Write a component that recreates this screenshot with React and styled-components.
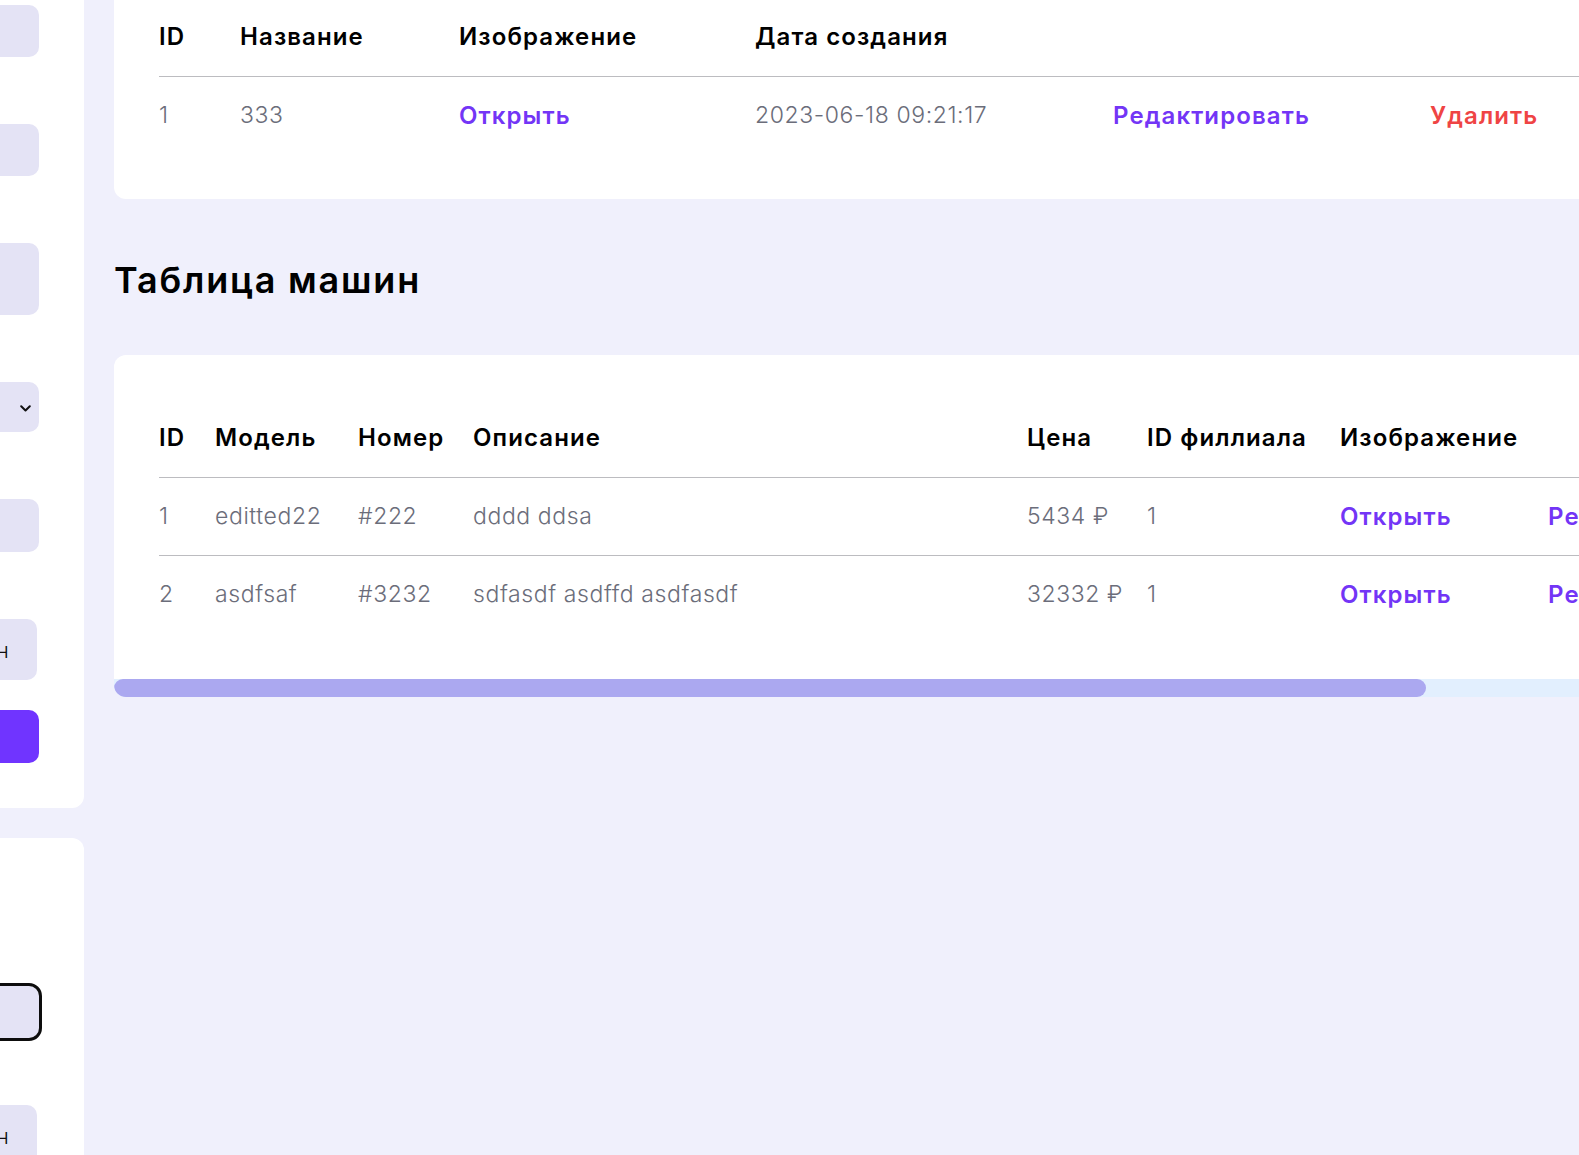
import React from 'react';
import styled, { createGlobalStyle } from 'styled-components';

const GlobalStyle = createGlobalStyle`
  html, body {
    margin: 0;
    padding: 0;
    overflow: hidden;
    background: #f0f0fc;
    font-family: Inter, "Noto Sans", sans-serif;
  }
  * {
    box-sizing: border-box;
  }
`;

const cars = [
  { id: 1, model: 'editted22', number: '#222', desc: 'dddd ddsa', price: '5434 ₽', branch: 1 },
  { id: 2, model: 'asdfsaf', number: '#3232', desc: 'sdfasdf asdffd asdfasdf', price: '32332 ₽', branch: 1 },
];

const App = () => {
  return (
    <>
      <GlobalStyle />
      <Page>
        <Sidebar>
          <Panel $paddingTop={14}>
            <Field>
              <Label>Модель</Label>
              <Input />
            </Field>
            <Field>
              <Label>Номер</Label>
              <Input />
            </Field>
            <Field>
              <Label>Описание</Label>
              <Input $height={72} />
            </Field>
            <Field>
              <Label>Филиал</Label>
              <Select>
                <svg width="11" height="7" viewBox="0 0 11 7" fill="none">
                  <path d="M1.2 1.2L5.5 5.5L9.8 1.2" stroke="#111" strokeWidth="2" strokeLinecap="round" strokeLinejoin="round" />
                </svg>
              </Select>
            </Field>
            <Field>
              <Label>Цена</Label>
              <Input $height={53} />
            </Field>
            <Field>
              <Label>Фото</Label>
              <FileButton>Загрузить фон</FileButton>
            </Field>
            <SubmitButton />
          </Panel>
          <Panel $paddingTop={41}>
            <PanelTitle>Город</PanelTitle>
            <Field>
              <Label>Название</Label>
              <Input $focused />
            </Field>
            <Field>
              <Label>Фото</Label>
              <FileButton>Загрузить фон</FileButton>
            </Field>
          </Panel>
        </Sidebar>

        <Main>
          <Card>
            <Table>
              <colgroup>
                <col style={{ width: 81 }} />
                <col style={{ width: 219 }} />
                <col style={{ width: 296 }} />
                <col style={{ width: 358 }} />
                <col style={{ width: 317 }} />
                <col />
              </colgroup>
              <thead>
                <tr>
                  <Th>ID</Th>
                  <Th>Название</Th>
                  <Th>Изображение</Th>
                  <Th>Дата создания</Th>
                  <Th />
                  <Th />
                </tr>
              </thead>
              <tbody>
                <Tr>
                  <Td>1</Td>
                  <Td>333</Td>
                  <Td><Action>Открыть</Action></Td>
                  <Td>2023-06-18 09:21:17</Td>
                  <Td><Action>Редактировать</Action></Td>
                  <Td><Action $danger>Удалить</Action></Td>
                </Tr>
              </tbody>
            </Table>
          </Card>

          <Title>Таблица машин</Title>

          <ScrollCard>
            <TableWrap>
              <Table $width={1861}>
                <colgroup>
                  <col style={{ width: 56 }} />
                  <col style={{ width: 143 }} />
                  <col style={{ width: 115 }} />
                  <col style={{ width: 554 }} />
                  <col style={{ width: 120 }} />
                  <col style={{ width: 193 }} />
                  <col style={{ width: 208 }} />
                  <col style={{ width: 317 }} />
                  <col />
                </colgroup>
                <thead>
                  <tr>
                    <Th>ID</Th>
                    <Th>Модель</Th>
                    <Th>Номер</Th>
                    <Th>Описание</Th>
                    <Th>Цена</Th>
                    <Th>ID филлиала</Th>
                    <Th>Изображение</Th>
                    <Th />
                    <Th />
                  </tr>
                </thead>
                <tbody>
                  {cars.map((car) => (
                    <Tr key={car.id}>
                      <Td>{car.id}</Td>
                      <Td>{car.model}</Td>
                      <Td>{car.number}</Td>
                      <Td>{car.desc}</Td>
                      <Td>{car.price}</Td>
                      <Td>{car.branch}</Td>
                      <Td><Action>Открыть</Action></Td>
                      <Td><Action>Редактировать</Action></Td>
                      <Td><Action $danger>Удалить</Action></Td>
                    </Tr>
                  ))}
                </tbody>
              </Table>
            </TableWrap>
            <ScrollTrack>
              <ScrollThumb $width={1312} />
            </ScrollTrack>
          </ScrollCard>
        </Main>
      </Page>
    </>
  );
};

export default App;

const Page = styled.div`
  display: flex;
  align-items: flex-start;
  width: max-content;
  margin: -46px 0 0 -216px;
`;

const Sidebar = styled.aside`
  flex: none;
  width: 300px;
  display: flex;
  flex-direction: column;
  gap: 30px;
`;

const Panel = styled.div`
  display: flex;
  flex-direction: column;
  gap: 30px;
  padding: ${({ $paddingTop }) => $paddingTop}px 45px 45px;
  background: #ffffff;
  border-radius: 12px;
  min-height: 400px;
`;

const PanelTitle = styled.h3`
  margin: 0;
  height: 40px;
  font-size: 24px;
  font-weight: 600;
  color: #000;
`;

const Field = styled.div`
  display: flex;
  flex-direction: column;
`;

const Label = styled.label`
  height: 28px;
  margin-bottom: 9px;
  font-size: 18px;
  color: #000;
`;

const Input = styled.div`
  height: ${({ $height }) => $height || 52}px;
  background: #e4e3f5;
  border-radius: 10px;
  outline: ${({ $focused }) => ($focused ? '3px solid #0d0d0d' : 'none')};
`;

const Select = styled.div`
  height: 50px;
  background: #e4e3f5;
  border-radius: 10px;
  display: flex;
  align-items: center;
  justify-content: flex-end;
  padding: 2px 8px 0 0;
`;

const FileButton = styled.div`
  height: 61px;
  width: 208px;
  background: #e4e3f5;
  border-radius: 10px;
  display: flex;
  align-items: center;
  justify-content: center;
  font-size: 22px;
  font-weight: 300;
  color: #111;
`;

const SubmitButton = styled.div`
  height: 53px;
  background: #7034ff;
  border-radius: 10px;
`;

const Main = styled.main`
  flex: none;
  width: 1630px;
  padding-left: 30px;
  display: flex;
  flex-direction: column;
`;

const Card = styled.section`
  background: #ffffff;
  border-radius: 12px;
  padding: 44px 45px 45px;
`;

const ScrollCard = styled.section`
  background: #ffffff;
  border-radius: 12px;
  overflow: hidden;
`;

const TableWrap = styled.div`
  padding: 44px 45px 46px;
`;

const ScrollTrack = styled.div`
  height: 18px;
  background: #e2effe;
`;

const ScrollThumb = styled.div`
  width: ${({ $width }) => $width}px;
  height: 100%;
  background: #aba8f0;
  border-radius: 9px;
`;

const Title = styled.h2`
  margin: 61px 0 55px;
  font-size: 36px;
  line-height: 40px;
  font-weight: 600;
  color: #000;
  letter-spacing: 1.8px;
`;

const Table = styled.table`
  width: ${({ $width }) => ($width ? `${$width}px` : '100%')};
  table-layout: fixed;
  border-collapse: collapse;
`;

const Th = styled.th`
  height: 78px;
  padding: 0;
  text-align: left;
  font-size: 24px;
  font-weight: 600;
  letter-spacing: 1.1px;
  color: #000;
  white-space: nowrap;
  border-bottom: 1.5px solid #bcbcc0;
`;

const Tr = styled.tr`
  & + & td {
    border-top: 1.5px solid #bcbcc0;
  }
`;

const Td = styled.td`
  height: 78px;
  padding: 0;
  font-size: 23px;
  font-weight: 300;
  letter-spacing: 0.6px;
  color: #6b6d7a;
  white-space: nowrap;
`;

const Action = styled.span`
  font-size: 24px;
  font-weight: 600;
  letter-spacing: 1.1px;
  color: ${({ $danger }) => ($danger ? '#ef4444' : '#7335f6')};
  cursor: pointer;
`;
